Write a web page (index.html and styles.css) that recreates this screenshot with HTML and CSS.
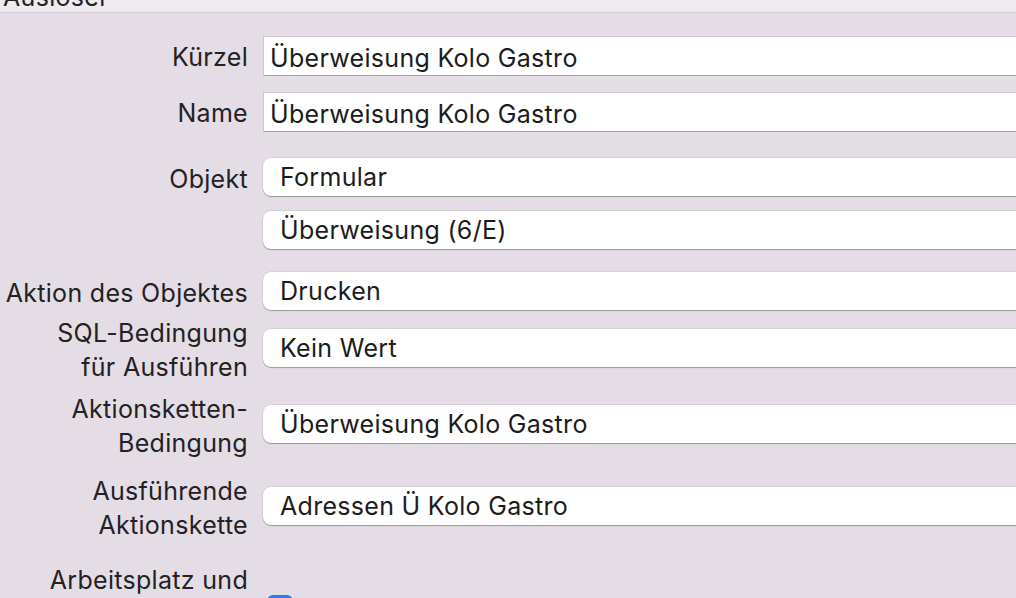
FILE: index.html
```html
<!DOCTYPE html>
<html>
<head>
    <meta charset="UTF-8">
    <title>Auslöser</title>
    <link rel="stylesheet" href="styles.css">
</head>
<body>
    <div class="header">
        <span class="header-title">Auslöser</span>
    </div>

    <div class="form">
        <!-- Text fields -->
        <div class="row row-text row-first">
            <label class="label">Kürzel</label>
            <input class="field" type="text" value="Überweisung Kolo Gastro">
        </div>
        <div class="row row-text row-near">
            <label class="label">Name</label>
            <input class="field" type="text" value="Überweisung Kolo Gastro">
        </div>

        <!-- Object popups -->
        <div class="row row-group">
            <label class="label">Objekt</label>
            <button class="popup">Formular</button>
        </div>
        <div class="row row-tight">
            <span class="label"></span>
            <button class="popup">Überweisung (6/E)</button>
        </div>
        <div class="row row-action">
            <label class="label">Aktion des Objektes</label>
            <button class="popup">Drucken</button>
        </div>

        <!-- Conditions -->
        <div class="row row-sql">
            <label class="label">SQL-Bedingung<br>für Ausführen</label>
            <button class="popup">Kein Wert</button>
        </div>
        <div class="row row-chain">
            <label class="label">Aktionsketten-<br>Bedingung</label>
            <button class="popup">Überweisung Kolo Gastro</button>
        </div>
        <div class="row row-exec">
            <label class="label">Ausführende<br>Aktionskette</label>
            <button class="popup">Adressen Ü Kolo Gastro</button>
        </div>

        <div class="row row-last">
            <label class="label">Arbeitsplatz und<br>Benutzer</label>
            <span class="checkbox"></span>
        </div>
    </div>
</body>
</html>
```

FILE: styles.css
```css
body {
    margin: 0;
    background: #e4dde5;
    font-family: Inter, "Noto Sans", sans-serif;
    font-size: 25px;
    letter-spacing: 0.3px;
    color: #222;
    overflow: hidden;
}
.header {
    height: 12px;
    overflow: hidden;
    background: #efe9f0;
    border-bottom: 1px solid #d2ccd4;
    padding-left: 3px;
}
.header-title {
    display: block;
    margin-top: -20px;
    line-height: 34px;
}
.form {
    width: 1300px;
}
.row {
    display: grid;
    grid-template-columns: 248px 1fr;
    column-gap: 15px;
    align-items: center;
}
.row-first { margin-top: 23px; }
.row-near { margin-top: 16px; }
.row-group { margin-top: 26px; }
.row-tight { margin-top: 15px; }
.row-action { margin-top: 23px; }
.row-sql { margin-top: 2px; }
.row-chain { margin-top: 4px; }
.row-exec { margin-top: 10px; }
.row-last {
    margin-top: 17px;
    align-items: start;
}
.label {
    text-align: right;
    line-height: 34px;
    padding-top: 4px;
    color: #232123;
}
.row-text .label {
    padding-top: 2px;
}
.field, .popup {
    font-family: inherit;
    font-size: 25px;
    letter-spacing: 0.3px;
    color: #1c1c1c;
    background: #fff;
    box-sizing: border-box;
    margin: 0;
    text-align: left;
}
.field {
    height: 40px;
    padding: 4px 6px 0;
    border: 1px solid #cdc8ce;
    border-bottom-color: #aaa5ab;
    border-radius: 0;
    outline: none;
}
.popup {
    height: 38px;
    padding: 0 17px;
    border: none;
    border-radius: 8px;
    box-shadow: 0 1px 1px rgba(0, 0, 0, 0.28), 0 0 0 0.5px rgba(0, 0, 0, 0.12);
}
.checkbox {
    display: block;
    width: 26px;
    height: 26px;
    margin-top: 36px;
    margin-left: 4px;
    border-radius: 6px;
    background: #2b7bf6;
}
```
